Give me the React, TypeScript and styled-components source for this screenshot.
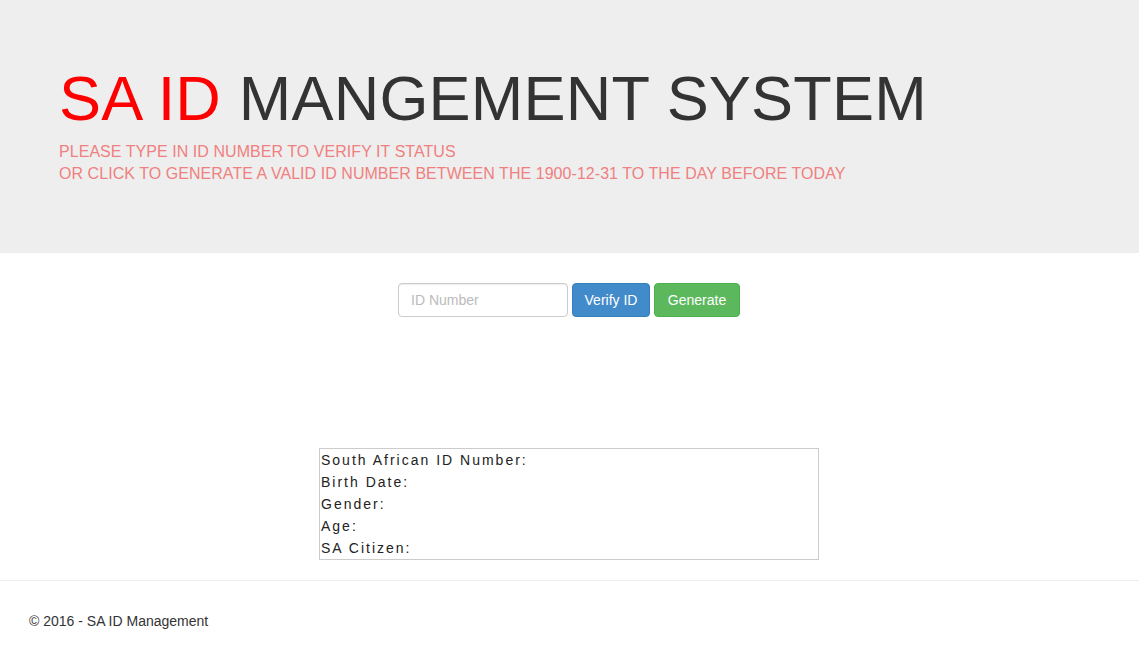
import React from "react";
import styled, { createGlobalStyle } from "styled-components";

const Global = createGlobalStyle`
  html, body { margin: 0; padding: 0; background: #fff; }
  body {
    font-family: "Liberation Sans", Arial, sans-serif;
    font-size: 14px;
    line-height: 1.42857;
    color: #333;
  }
  #root { margin-right: 3px; }
`;

const Jumbotron = styled.header`
  background: #eeeeee;
  height: 253px;
  box-sizing: border-box;
  padding: 64px 60px 0 59px;
`;

const Title = styled.h1`
  margin: 0;
  font-size: 63px;
  font-weight: 400;
  line-height: 1.1;
  letter-spacing: 0.2px;
  color: #333;
  white-space: nowrap;
`;

const Red = styled.span`
  color: #ff0000;
`;

const Subtitle = styled.p`
  margin: 8px 0 0 0;
  font-size: 16px;
  line-height: 22px;
  letter-spacing: 0.05px;
  color: #f08080;
  text-transform: uppercase;
`;

const Main = styled.main`
  padding-right: 1px;
`;

const FormRow = styled.form`
  display: flex;
  justify-content: center;
  gap: 4px;
  margin-top: 30px;
`;

const Input = styled.input`
  box-sizing: border-box;
  width: 170px;
  height: 34px;
  padding: 6px 12px;
  border: 1px solid #ccc;
  border-radius: 4px;
  font-family: "Liberation Sans", Arial, sans-serif;
  font-size: 14px;
  color: #555;
  background: #fff;
  box-shadow: inset 0 1px 1px rgba(0, 0, 0, 0.075);
  &::placeholder { color: #bbb; }
`;

const Button = styled.button<{ $variant: "primary" | "success"; $w: number }>`
  box-sizing: border-box;
  height: 34px;
  width: ${(p) => p.$w}px;
  padding: 6px 0;
  border-radius: 4px;
  border: 1px solid ${(p) => (p.$variant === "primary" ? "#357ebd" : "#4cae4c")};
  background: ${(p) => (p.$variant === "primary" ? "#428bca" : "#5cb85c")};
  color: #fff;
  font-family: "Liberation Sans", Arial, sans-serif;
  font-size: 14px;
  line-height: 20px;
  cursor: pointer;
`;

const ResultBox = styled.div`
  box-sizing: border-box;
  width: 500px;
  margin: 131px auto 0;
  border: 1px solid #ccc;
  padding: 0 1px;
`;

const ResultLine = styled.div`
  font-size: 14px;
  line-height: 22px;
  letter-spacing: 2px;
  color: #222;
`;

const Rule = styled.hr`
  margin: 20px 0 0;
  border: 0;
  border-top: 1px solid #eee;
`;

const Footer = styled.footer`
  padding: 30px 29px 30px;
  font-size: 14px;
  line-height: 20px;
  color: #333;
`;

const fields = [
  "South African ID Number:",
  "Birth Date:",
  "Gender:",
  "Age:",
  "SA Citizen:",
];

export default function App() {
  return (
    <>
      <Global />
      <Jumbotron>
        <Title>
          <Red>SA ID</Red> MANGEMENT SYSTEM
        </Title>
        <Subtitle>
          Please type in ID number to verify it status
          <br />
          Or click to generate a valid ID number between the 1900-12-31 to the day before today
        </Subtitle>
      </Jumbotron>
      <Main>
        <FormRow onSubmit={(e) => e.preventDefault()}>
          <Input placeholder="ID Number" />
          <Button type="button" $variant="primary" $w={78}>Verify ID</Button>
          <Button type="button" $variant="success" $w={86}>Generate</Button>
        </FormRow>
        <ResultBox>
          {fields.map((f) => (
            <ResultLine key={f}>{f}</ResultLine>
          ))}
        </ResultBox>
      </Main>
      <Rule />
      <Footer>© 2016 - SA ID Management</Footer>
    </>
  );
}
